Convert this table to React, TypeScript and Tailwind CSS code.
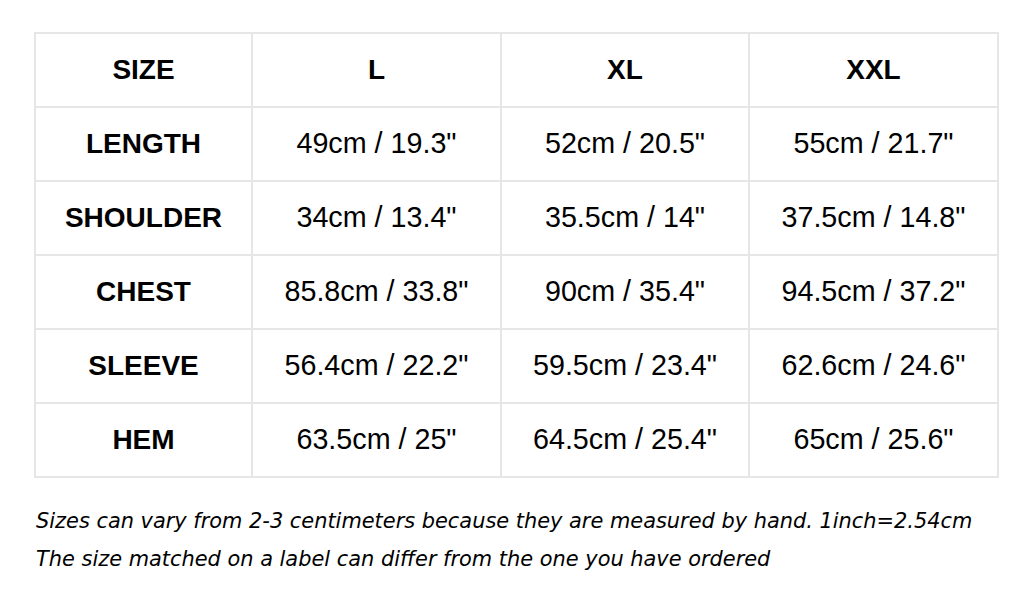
import { Fragment } from "react";

const columns = ["SIZE", "L", "XL", "XXL"];

const rows: [string, string, string, string][] = [
  ["LENGTH", '49cm / 19.3"', '52cm / 20.5"', '55cm / 21.7"'],
  ["SHOULDER", '34cm / 13.4"', '35.5cm / 14"', '37.5cm / 14.8"'],
  ["CHEST", '85.8cm / 33.8"', '90cm / 35.4"', '94.5cm / 37.2"'],
  ["SLEEVE", '56.4cm / 22.2"', '59.5cm / 23.4"', '62.6cm / 24.6"'],
  ["HEM", '63.5cm / 25"', '64.5cm / 25.4"', '65cm / 25.6"'],
];

export default function App() {
  return (
    <div className="w-[1028px] h-[594px] bg-white pl-[34px] pt-[32px]">
      {/* size table: grid with gap as the border lines */}
      <div
        className="grid w-[965px] grid-cols-[215px_247px_246px_247px] auto-rows-[72px] gap-[2px] p-[2px] bg-[#e6e6e6] text-[28.7px] text-black"
        style={{ fontFamily: '"Liberation Sans", Arial, sans-serif' }}
      >
        {columns.map((c) => (
          <div key={c} className="bg-white flex items-center justify-center font-bold text-[28px]">
            {c}
          </div>
        ))}
        {rows.map((r) => (
          <Fragment key={r[0]}>
            <div className="bg-white flex items-center justify-center font-bold text-[28px]">
              {r[0]}
            </div>
            {r.slice(1).map((v, i) => (
              <div key={i} className="bg-white flex items-center justify-center">
                {v}
              </div>
            ))}
          </Fragment>
        ))}
      </div>

      <div
        className="mt-[24px] pl-[2px] italic text-[20.9px] leading-[38px] text-black"
        style={{ fontFamily: '"DejaVu Sans", Verdana, sans-serif' }}
      >
        <p>Sizes can vary from 2-3 centimeters because they are measured by hand. 1inch=2.54cm</p>
        <p>The size matched on a label can differ from the one you have ordered</p>
      </div>
    </div>
  );
}
